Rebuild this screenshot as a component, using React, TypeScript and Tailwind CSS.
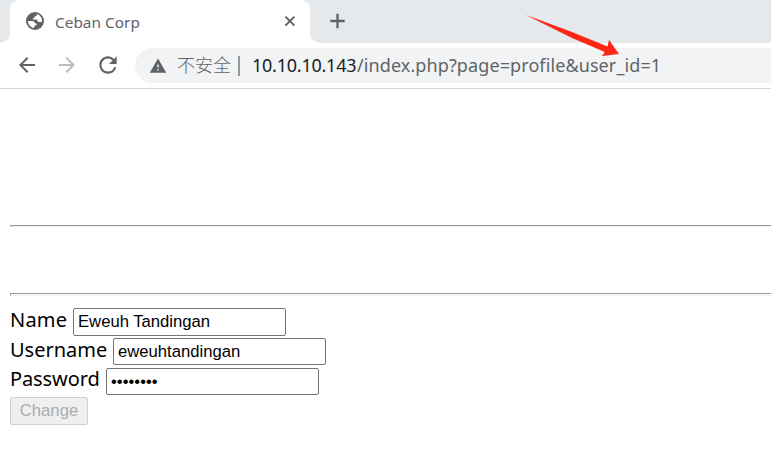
import React from 'react';
import { MdArrowBack, MdArrowForward, MdRefresh, MdWarning } from 'react-icons/md';

const uiFont = "font-['Noto_Sans','Noto_Sans_CJK_SC',sans-serif]";

function Globe() {
  return (
    <svg viewBox="0 0 18 18" className="mt-[12px] ml-[16px] size-[18px] shrink-0">
      <circle cx="9" cy="9" r="9" fill="#5f6368" />
      <path
        d="M10.6 2 C11.2 3 10.8 3.9 9.6 4.2 L8.6 4.6 C8.7 6 7.8 6.3 6.8 6.5 L6.8 7.6 L10.4 7.6 C11.6 7.8 11.4 9.6 12.6 10 L15.9 9.9 C16.5 6.5 14.3 2.8 10.6 2 Z M2 9 L5.5 9 C7.5 9 8.9 9.9 8.9 11.2 L10.5 11.4 C11.2 12.2 10.6 13.3 9.5 13.4 L8.4 13.6 L8.2 16 C4.5 15.6 2 12.6 2 9 Z"
        fill="white"
      />
    </svg>
  );
}

function TabStrip() {
  return (
    <div className="flex h-[43px] bg-white">
      <div className="w-[10px] shrink-0 rounded-br-[10px] bg-[#e5e9ec]" />
      <div className="w-[300px] shrink-0 bg-[#e5e9ec]">
        <div className="flex h-full rounded-t-[9px] bg-white">
          <Globe />
          <span className={`mt-[12px] ml-[11px] h-[20px] w-[202px] text-[15.3px] leading-[20px] tracking-[0.05px] text-[#5f6368] ${uiFont}`}>
            Ceban Corp
          </span>
          <svg viewBox="0 0 12 12" className="mt-[15px] ml-[27px] size-[12px] shrink-0">
            <path d="M1.4 1.6 L10.4 10.6 M10.4 1.6 L1.4 10.6" stroke="#5f6368" strokeWidth="2" />
          </svg>
        </div>
      </div>
      <div className="flex flex-1 rounded-bl-[10px] bg-[#e5e9ec]">
        <svg viewBox="0 0 16 16" className="mt-[13px] ml-[20px] size-[16px] shrink-0">
          <path d="M7.5 0.8 V15.2 M0.3 8 H14.7" stroke="#5f6368" strokeWidth="2.3" />
        </svg>
      </div>
    </div>
  );
}

function Toolbar() {
  return (
    <div className="flex h-[46px] border-b border-[#d5d7d9] bg-white pt-[5px]">
      <MdArrowBack className="mt-[5px] ml-[15px] size-[24px] shrink-0 text-[#5f6368]" />
      <MdArrowForward className="mt-[5px] ml-[16px] size-[24px] shrink-0 text-[#babcbe]" />
      <MdRefresh className="mt-[4px] ml-[16px] size-[26px] shrink-0 text-[#5f6368]" />
      <div className={`ml-[14px] flex h-[35px] flex-1 items-center overflow-hidden rounded-l-full bg-[#f1f3f4] pl-[14px] text-[18px] leading-[35px] whitespace-nowrap text-[#5f6368] ${uiFont}`}>
        <MdWarning className="size-[18px] shrink-0" />
        <span className="ml-[10px] w-[54px] font-light">不安全</span>
        <span className="ml-[7px] h-[20px] w-[2px] bg-[#96999c]" />
        <span className="ml-[12px] w-[105px] tracking-[-0.24px] text-[#202124]">10.10.10.143</span>
        <span className="tracking-[0.1px]">/index.php?page=profile&amp;user_id=1</span>
      </div>
    </div>
  );
}

const inputClass =
  "block w-[213px] rounded-[2px] border border-[#767676] bg-white pl-[4px] font-['Liberation_Sans',sans-serif] text-[16.67px] text-black outline-none";
const labelClass = `block shrink-0 text-[20px] text-black ${uiFont}`;

function ProfileForm() {
  return (
    <form className="mt-[12px]">
      <div className="flex h-[30px]">
        <label className={`${labelClass} w-[63px] leading-[24px] tracking-[0.2px]`}>Name</label>
        <input className={`${inputClass} h-[28px]`} defaultValue="Eweuh Tandingan" />
      </div>
      <div className="flex h-[30px]">
        <label className={`${labelClass} w-[103px] leading-[24px]`}>Username</label>
        <input className={`${inputClass} h-[27px]`} defaultValue="eweuhtandingan" />
      </div>
      <div className="flex h-[29px]">
        <label className={`${labelClass} w-[96px] leading-[22px] tracking-[-0.1px]`}>Password</label>
        <input className={`${inputClass} h-[27px]`} type="password" defaultValue="password" />
      </div>
      <button
        type="button"
        disabled
        className="block h-[28px] w-[78px] rounded-[2px] border border-[#d0d0d0] bg-[#efefef] font-['Liberation_Sans',sans-serif] text-[16.67px] leading-[26px] text-[#acacac]"
      >
        Change
      </button>
    </form>
  );
}

export default function App() {
  return (
    <div className="relative h-[449px] w-[771px] overflow-hidden bg-white">
      <TabStrip />
      <Toolbar />
      <main className="pt-[136px] pl-[10px]">
        <div className="h-[2px] border-t border-b border-l border-t-[#9a9a9a] border-b-[#eeeeee] border-l-[#9a9a9a]" />
        <div className="mt-[66px] h-[3px] border-t border-b border-l border-t-[#9a9a9a] border-b-[#eeeeee] border-l-[#9a9a9a]" />
        <ProfileForm />
      </main>
      <svg viewBox="0 0 771 449" className="pointer-events-none absolute inset-0 h-full w-full">
        <path d="M526 15 L572 32 L607.5 46.5 L609 40 L619 54 L602 56 L604.8 52 L572 38 Z" fill="#ff2616" />
      </svg>
    </div>
  );
}
